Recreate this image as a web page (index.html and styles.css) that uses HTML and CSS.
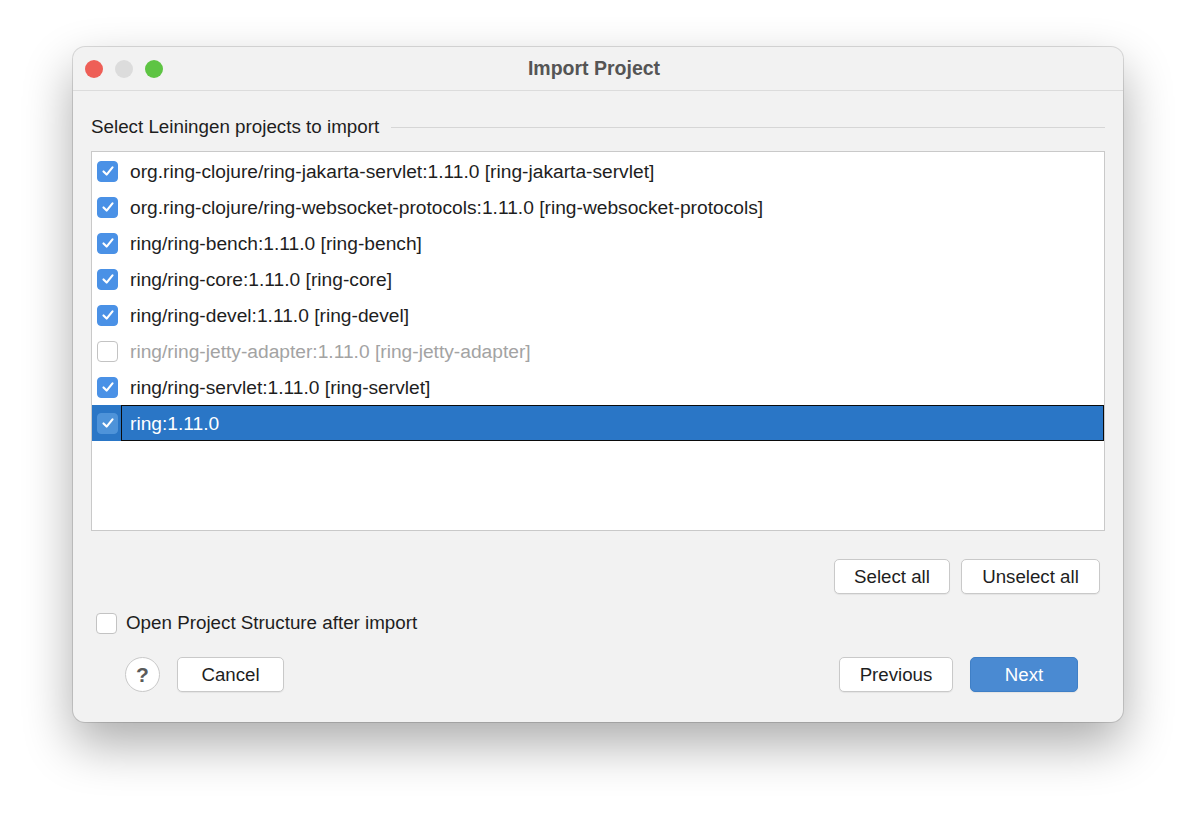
FILE: index.html
```html
<!DOCTYPE html>
<html lang="en">
<head>
    <meta charset="UTF-8">
    <title>Import Project</title>
    <link rel="stylesheet" href="styles.css">
</head>
<body>
    <div class="window">
        <div class="titlebar">
            <div class="lights">
                <span class="light red"></span>
                <span class="light grey"></span>
                <span class="light green"></span>
            </div>
            <div class="title">Import Project</div>
            <div></div>
        </div>

        <div class="content">
            <div class="section-head">
                <span>Select Leiningen projects to import</span>
                <div class="rule"></div>
            </div>

            <div class="list">
                <div class="row"><span class="check on"><svg viewBox="0 0 20 20"><polyline points="5,10.5 8.5,14 15,6"/></svg></span><span class="label">org.ring-clojure/ring-jakarta-servlet:1.11.0 [ring-jakarta-servlet]</span></div>
                <div class="row"><span class="check on"><svg viewBox="0 0 20 20"><polyline points="5,10.5 8.5,14 15,6"/></svg></span><span class="label">org.ring-clojure/ring-websocket-protocols:1.11.0 [ring-websocket-protocols]</span></div>
                <div class="row"><span class="check on"><svg viewBox="0 0 20 20"><polyline points="5,10.5 8.5,14 15,6"/></svg></span><span class="label">ring/ring-bench:1.11.0 [ring-bench]</span></div>
                <div class="row"><span class="check on"><svg viewBox="0 0 20 20"><polyline points="5,10.5 8.5,14 15,6"/></svg></span><span class="label">ring/ring-core:1.11.0 [ring-core]</span></div>
                <div class="row"><span class="check on"><svg viewBox="0 0 20 20"><polyline points="5,10.5 8.5,14 15,6"/></svg></span><span class="label">ring/ring-devel:1.11.0 [ring-devel]</span></div>
                <div class="row disabled"><span class="check"></span><span class="label">ring/ring-jetty-adapter:1.11.0 [ring-jetty-adapter]</span></div>
                <div class="row"><span class="check on"><svg viewBox="0 0 20 20"><polyline points="5,10.5 8.5,14 15,6"/></svg></span><span class="label">ring/ring-servlet:1.11.0 [ring-servlet]</span></div>
                <div class="row selected"><span class="check on"><svg viewBox="0 0 20 20"><polyline points="5,10.5 8.5,14 15,6"/></svg></span><span class="label">ring:1.11.0</span></div>
            </div>

            <div class="select-buttons">
                <button class="btn sel">Select all</button>
                <button class="btn unsel">Unselect all</button>
            </div>

            <div class="open-row">
                <span class="check"></span>
                <span>Open Project Structure after import</span>
            </div>

            <div class="footer">
                <div class="left">
                    <button class="help">?</button>
                    <button class="btn cancel">Cancel</button>
                </div>
                <div class="right">
                    <button class="btn prev">Previous</button>
                    <button class="btn primary next">Next</button>
                </div>
            </div>
        </div>
    </div>
</body>
</html>
```

FILE: styles.css
```css
* {
    margin: 0;
    padding: 0;
    box-sizing: border-box;
}

html {
    background: #ffffff;
}

body {
    font-family: "Liberation Sans", Arial, sans-serif;
    background: #ffffff;
    padding: 47px 73px;
    min-height: 823px;
    color: #1e1e1e;
}

.window {
    width: 1050px;
    height: 675px;
    background-color: #f2f2f2;
    border-radius: 12px;
    box-shadow: 0 0 0 1px rgba(0, 0, 0, 0.13), 0 22px 50px rgba(0, 0, 0, 0.33);
    overflow: hidden;
}

.titlebar {
    height: 44px;
    display: grid;
    grid-template-columns: 1fr auto 1fr;
    align-items: center;
    border-bottom: 1px solid #dcdcdc;
}

.lights {
    display: flex;
    gap: 12px;
    padding-left: 12px;
}

.light {
    width: 18px;
    height: 18px;
    border-radius: 50%;
}

.red { background-color: #ee5f57; }
.grey { background-color: #dcdcdc; }
.green { background-color: #5ec443; }

.title {
    font-size: 19.5px;
    font-weight: bold;
    color: #555555;
    margin-right: 8px;
}

.content {
    padding: 26px 18px 0 18px;
}

.section-head {
    display: flex;
    align-items: center;
    gap: 12px;
    font-size: 18.8px;
    height: 20px;
}

.rule {
    flex: 1;
    height: 1px;
    background-color: #d6d6d6;
}

.list {
    margin-top: 14px;
    height: 380px;
    background-color: #ffffff;
    border: 1px solid #c9c9c9;
    padding-top: 1px;
}

.row {
    height: 36px;
    display: flex;
    align-items: center;
    padding-left: 5px;
    font-size: 19.2px;
}

.row .label {
    flex: 1;
    height: 36px;
    display: flex;
    align-items: center;
    margin-left: 3px;
    padding-left: 8px;
    padding-top: 1px;
    border: 1px solid transparent;
}

.check {
    width: 21px;
    height: 21px;
    border-radius: 4px;
    border: 1px solid #c3c3c3;
    background-color: #ffffff;
    display: inline-flex;
    align-items: center;
    justify-content: center;
    flex-shrink: 0;
}

.check.on {
    background-color: #4a91e6;
    border-color: #4a91e6;
}

.check svg {
    width: 18px;
    height: 18px;
    fill: none;
    stroke: #ffffff;
    stroke-width: 2.4;
    stroke-linecap: round;
    stroke-linejoin: round;
}

.row.disabled {
    color: #a3a3a3;
}

.row.selected {
    background-color: #2a76c6;
    color: #ffffff;
}

.row.selected .check.on {
    background-color: #4e93d9;
    border-color: #4e93d9;
}

.row.selected .label {
    border-color: #0b0b0b;
}

.btn {
    font-family: "Liberation Sans", Arial, sans-serif;
    font-size: 18.7px;
    height: 35px;
    background-color: #ffffff;
    color: #1e1e1e;
    border: 1px solid #c9c9c9;
    border-radius: 5px;
    box-shadow: 0 1px 1px rgba(0, 0, 0, 0.06);
}

.select-buttons {
    margin-top: 28px;
    display: flex;
    justify-content: flex-end;
    gap: 11px;
    padding-right: 5px;
}

.sel { width: 116px; }
.unsel { width: 139px; }

.open-row {
    margin-top: 18px;
    display: flex;
    align-items: center;
    gap: 9px;
    padding-left: 5px;
    font-size: 18.8px;
}

.footer {
    margin-top: 23px;
    display: flex;
    justify-content: space-between;
    align-items: center;
    padding: 0 27px 0 34px;
}

.left, .right {
    display: flex;
    align-items: center;
    gap: 17px;
}

.help {
    width: 35px;
    height: 35px;
    border-radius: 50%;
    background-color: #ffffff;
    border: 1px solid #c9c9c9;
    font-family: "Liberation Sans", Arial, sans-serif;
    font-size: 21px;
    font-weight: bold;
    color: #5a5a5a;
}

.cancel { width: 107px; }
.prev { width: 114px; }

.next {
    width: 108px;
    background-color: #4a8ad2;
    border-color: #3f7fc6;
    color: #ffffff;
}
```
